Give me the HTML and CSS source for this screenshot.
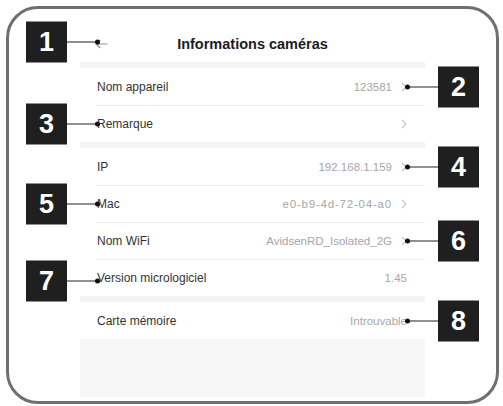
FILE: index.html
```html
<!DOCTYPE html>
<html lang="fr">
<head>
    <meta charset="UTF-8">
    <meta name="viewport" content="width=device-width, initial-scale=1.0">
    <title>Informations caméras</title>
    <link rel="stylesheet" href="styles.css">
</head>
<body>

<div class="frame">
    <div class="screen">
        <div class="titlebar">
            <svg class="back" width="13" height="10" viewBox="0 0 13 10">
                <path d="M12.5 5H1.2M5.2 1L1.2 5l4 4" fill="none" stroke="#8f8f8f" stroke-width="1.2"/>
            </svg>
            <h1>Informations caméras</h1>
            <span class="callout callout-left callout-title"><b class="badge">1</b><i class="lead"></i></span>
        </div>

        <div class="gap"></div>

        <div class="group">
            <div class="row">
                <span class="label">Nom appareil</span>
                <span class="value">123581</span>
                <svg class="chevron" width="6" height="10" viewBox="0 0 6 10"><path d="M1 1l4 4-4 4" fill="none" stroke="#c6c6c6" stroke-width="1.1"/></svg>
                <span class="callout callout-right"><b class="badge">2</b><i class="lead"></i></span>
            </div>
            <div class="row">
                <span class="label">Remarque</span>
                <svg class="chevron" width="6" height="10" viewBox="0 0 6 10"><path d="M1 1l4 4-4 4" fill="none" stroke="#c6c6c6" stroke-width="1.1"/></svg>
                <span class="callout callout-left"><b class="badge">3</b><i class="lead"></i></span>
            </div>
        </div>

        <div class="gap"></div>

        <div class="group">
            <div class="row">
                <span class="label">IP</span>
                <span class="value">192.168.1.159</span>
                <svg class="chevron" width="6" height="10" viewBox="0 0 6 10"><path d="M1 1l4 4-4 4" fill="none" stroke="#c6c6c6" stroke-width="1.1"/></svg>
                <span class="callout callout-right"><b class="badge">4</b><i class="lead"></i></span>
            </div>
            <div class="row">
                <span class="label">Mac</span>
                <span class="value value-mac">e0-b9-4d-72-04-a0</span>
                <svg class="chevron" width="6" height="10" viewBox="0 0 6 10"><path d="M1 1l4 4-4 4" fill="none" stroke="#c6c6c6" stroke-width="1.1"/></svg>
                <span class="callout callout-left"><b class="badge">5</b><i class="lead"></i></span>
            </div>
            <div class="row">
                <span class="label">Nom WiFi</span>
                <span class="value">AvidsenRD_Isolated_2G</span>
                <svg class="chevron" width="6" height="10" viewBox="0 0 6 10"><path d="M1 1l4 4-4 4" fill="none" stroke="#c6c6c6" stroke-width="1.1"/></svg>
                <span class="callout callout-right"><b class="badge">6</b><i class="lead"></i></span>
            </div>
            <div class="row">
                <span class="label">Version micrologiciel</span>
                <span class="value">1.45</span>
                <span class="callout callout-left callout-low"><b class="badge">7</b><i class="lead"></i></span>
            </div>
        </div>

        <div class="gap"></div>

        <div class="group">
            <div class="row">
                <span class="label">Carte mémoire</span>
                <span class="value">Introuvable</span>
                <span class="callout callout-right"><b class="badge">8</b><i class="lead"></i></span>
            </div>
        </div>

        <div class="filler"></div>
    </div>
</div>

</body>
</html>
```

FILE: styles.css
```css
/* Global styles */
* {
    box-sizing: border-box;
}
body {
    margin: 0;
    background-color: #fff;
    font-family: "Liberation Sans", Arial, sans-serif;
    color: #333;
}

/* Rounded manual frame */
.frame {
    margin: 6px;
    width: 493px;
    height: 398px;
    border: 3px solid #6f6f6f;
    border-radius: 32px;
    padding: 12px 0 4px 71px;
}
.screen {
    width: 345px;
    height: 100%;
    display: flex;
    flex-direction: column;
    background-color: #fff;
}

/* Title bar */
.titlebar {
    position: relative;
    height: 41px;
    display: grid;
    grid-template-columns: 1fr auto 1fr;
    align-items: center;
    padding: 5px 15px 0;
}
.titlebar h1 {
    margin: 0;
    font-size: 14.5px;
    font-weight: bold;
    color: #1c1c1c;
}

/* List */
.gap {
    height: 6px;
    background-color: #f4f4f4;
}
.group {
    background-color: #fff;
}
.row {
    position: relative;
    height: 37px;
    margin-left: 16px;
    padding: 0 18px 0 1px;
    display: flex;
    align-items: center;
}
.row + .row {
    border-top: 1px solid #ededed;
}
.label {
    flex: 1;
    font-size: 12px;
    color: #333;
}
.value {
    font-size: 11.5px;
    color: #a6a6a6;
}
.value-mac {
    letter-spacing: 0.8px;
}
.chevron {
    margin-left: 9px;
}
.filler {
    flex: 1;
    background-color: #f7f7f7;
}

/* Numbered callouts */
.callout {
    position: absolute;
    top: 50%;
    transform: translateY(-50%);
    display: flex;
    align-items: center;
}
.callout-left {
    left: -70px;
}
.callout-title {
    left: -54px;
}
.callout-low {
    top: calc(50% + 3px);
}
.callout-right {
    right: -54px;
    flex-direction: row-reverse;
}
.badge {
    width: 41px;
    height: 41px;
    background-color: #1f1f1f;
    color: #fff;
    font-size: 27px;
    line-height: 41px;
    font-weight: bold;
    text-align: center;
}
.lead {
    position: relative;
    width: 33px;
    height: 1px;
    background-color: #222;
}
.lead::after {
    content: "";
    position: absolute;
    top: -2px;
    width: 5px;
    height: 5px;
    border-radius: 50%;
    background-color: #111;
}
.callout-left .lead::after {
    right: 0;
}
.callout-right .lead::after {
    left: 0;
}
```
